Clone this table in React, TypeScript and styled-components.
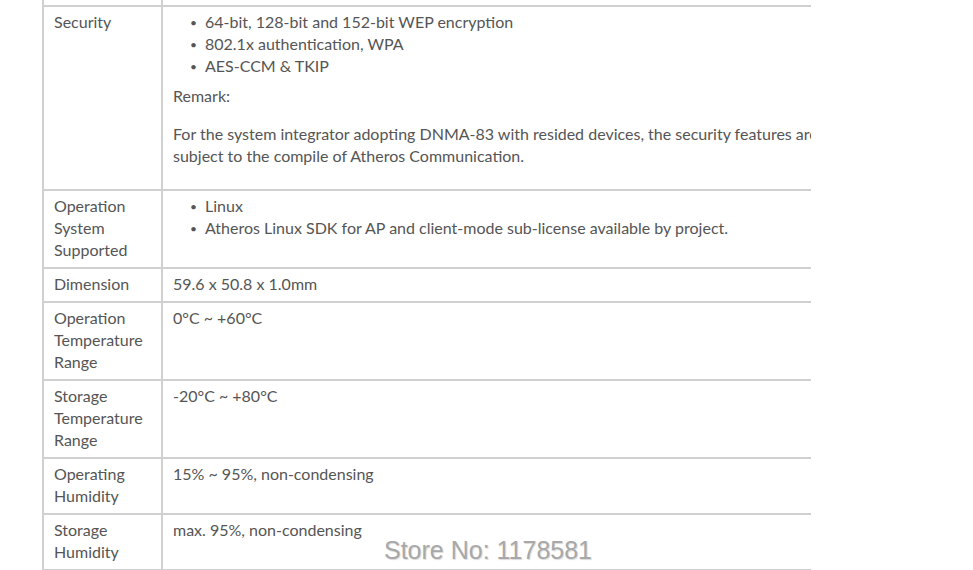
import React from 'react';
import styled, { createGlobalStyle } from 'styled-components';

const GlobalStyle = createGlobalStyle`
  body {
    margin: 0;
    background: #fff;
  }
`;

const specs = [
  {
    name: 'Operation System Supported',
    items: ['Linux', 'Atheros Linux SDK for AP and client-mode sub-license available by project.'],
  },
  { name: 'Dimension', text: '59.6 x 50.8 x 1.0mm' },
  { name: 'Operation Temperature Range', text: '0°C ~ +60°C' },
  { name: 'Storage Temperature Range', text: '-20°C ~ +80°C' },
  { name: 'Operating Humidity', text: '15% ~ 95%, non-condensing' },
  { name: 'Storage Humidity', text: 'max. 95%, non-condensing' },
];

const Page = styled.div`
  position: relative;
  height: 570px;
  padding-left: 42px;
  overflow: hidden;
  font-family: Lato, 'Liberation Sans', sans-serif;
  font-size: 16px;
  line-height: 22px;
  color: #555;
`;

const Clip = styled.div`
  width: 769px;
  overflow: hidden;
`;

const SpecTable = styled.table`
  width: 812px;
  border-collapse: separate;
  border-spacing: 0;
  table-layout: fixed;
`;

const Cell = styled.td<{ $stub?: boolean; $label?: boolean }>`
  box-sizing: border-box;
  width: ${(p) => (p.$label ? '119px' : 'auto')};
  height: ${(p) => (p.$stub ? '7px' : 'auto')};
  padding: ${(p) => (p.$stub ? '0' : '4px 10px 6px')};
  border-left: 2px solid #d0d0d0;
  border-bottom: 2px solid #d0d0d0;
  vertical-align: top;
  text-align: left;
`;

const Bullets = styled.ul`
  list-style: none;
  margin: 0;
  padding-left: 17px;

  li {
    height: 22px;
    white-space: nowrap;
  }

  li::before {
    content: '•';
    display: inline-block;
    vertical-align: top;
    width: 15px;
    height: 22px;
    font-size: 12px;
    line-height: 24px;
  }
`;

const Para = styled.p<{ $gap: number; $after?: number }>`
  margin: ${(p) => `${p.$gap}px 0 ${p.$after ?? 0}px`};
`;

const Watermark = styled.div`
  position: absolute;
  left: 384px;
  top: 535px;
  font-family: 'Liberation Sans', Arial, sans-serif;
  font-size: 25px;
  line-height: 30px;
  color: #a8a8a8;
  text-shadow: 1px 1px 1px rgba(0, 0, 0, 0.15);
`;

const App = () => (
  <Page>
    <GlobalStyle />
    <Clip>
      <SpecTable>
        <tbody>
          <tr>
            <Cell $stub $label />
            <Cell $stub />
          </tr>
          <tr>
            <Cell $label>Security</Cell>
            <Cell>
              <Bullets>
                <li>64-bit, 128-bit and 152-bit WEP encryption</li>
                <li>802.1x authentication, WPA</li>
                <li>AES-CCM &amp; TKIP</li>
              </Bullets>
              <Para $gap={8}>Remark:</Para>
              <Para $gap={16} $after={16}>
                For the system integrator adopting DNMA-83 with resided devices, the security features are
                subject to the compile of Atheros Communication.
              </Para>
            </Cell>
          </tr>
          {specs.map((s) => (
            <tr key={s.name}>
              <Cell $label>{s.name}</Cell>
              <Cell>
                {s.items ? (
                  <Bullets>
                    {s.items.map((it) => (
                      <li key={it}>{it}</li>
                    ))}
                  </Bullets>
                ) : (
                  s.text
                )}
              </Cell>
            </tr>
          ))}
        </tbody>
      </SpecTable>
    </Clip>
    <Watermark>Store No: 1178581</Watermark>
  </Page>
);

export default App;
